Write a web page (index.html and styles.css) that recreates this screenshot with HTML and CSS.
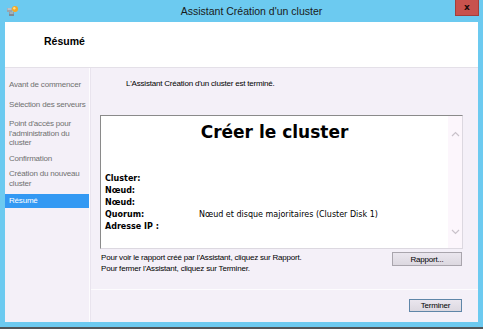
FILE: index.html
```html
<!DOCTYPE html>
<html lang="fr">
<head>
    <meta charset="UTF-8">
    <title>Assistant Création d'un cluster</title>
    <link rel="stylesheet" href="styles.css">
</head>
<body>
    <div class="window">
        <div class="title-bar">
            <svg class="title-icon" width="12" height="12" viewBox="0 0 12 12">
                <rect x="0" y="3" width="5" height="4" fill="#9aa4ac"/>
                <rect x="2" y="7" width="5" height="4" fill="#7f8a93"/>
                <rect x="0.5" y="3.5" width="4" height="1" fill="#d9dee2"/>
                <rect x="2.5" y="7.5" width="4" height="1" fill="#d0d6da"/>
                <circle cx="8" cy="4" r="3" fill="#f7a823"/>
                <circle cx="7.3" cy="3.2" r="1.2" fill="#fde08a"/>
            </svg>
            <span class="title-text">Assistant Création d'un cluster</span>
            <button class="close-btn">x</button>
        </div>

        <div class="client">
            <div class="header">
                <h1>Résumé</h1>
            </div>

            <div class="body">
                <ul class="steps">
                    <li class="step spaced">Avant de commencer</li>
                    <li class="step spaced">Sélection des serveurs</li>
                    <li class="step">Point d'accès pour l'administration du cluster</li>
                    <li class="step">Confirmation</li>
                    <li class="step">Création du nouveau cluster</li>
                    <li class="step current">Résumé</li>
                </ul>

                <div class="main">
                    <p class="intro">L'Assistant Création d'un cluster est terminé.</p>

                    <div class="report">
                        <div class="report-content">
                            <h2>Créer le cluster</h2>
                            <dl class="summary">
                                <dt>Cluster:</dt><dd></dd>
                                <dt>Nœud:</dt><dd></dd>
                                <dt>Nœud:</dt><dd></dd>
                                <dt>Quorum:</dt><dd>Nœud et disque majoritaires (Cluster Disk 1)</dd>
                                <dt>Adresse IP :</dt><dd></dd>
                            </dl>
                        </div>
                        <div class="scrollbar">
                            <svg width="9" height="6" viewBox="0 0 9 6"><path d="M1 5 L4.5 1.5 L8 5" fill="none" stroke="#c9c2ca" stroke-width="1.2"/></svg>
                            <svg width="9" height="6" viewBox="0 0 9 6"><path d="M1 1 L4.5 4.5 L8 1" fill="none" stroke="#c9c2ca" stroke-width="1.2"/></svg>
                        </div>
                    </div>

                    <div class="after">
                        <p class="hint">Pour voir le rapport créé par l'Assistant, cliquez sur Rapport.<br>Pour fermer l'Assistant, cliquez sur Terminer.</p>
                        <button class="btn btn-report">Rapport...</button>
                    </div>

                    <div class="footer">
                        <button class="btn btn-default">Terminer</button>
                    </div>
                </div>
            </div>
        </div>
    </div>
</body>
</html>
```

FILE: styles.css
```css
:root {
    --frame: #6ccaf0;
    --panel: #f4f0f8;
    --select: #3399f3;
    --ui-font: "Liberation Sans", Arial, sans-serif;
    --report-font: "DejaVu Sans", Verdana, sans-serif;
}

* {
    box-sizing: border-box;
}

body {
    margin: 0;
    background: var(--frame);
    font-family: var(--ui-font);
}

.window {
    width: 483px;
    height: 329px;
    display: flex;
    flex-direction: column;
    background: var(--frame);
    padding-bottom: 5px;
    border-bottom: 2px solid #505558;
}

/* Title bar */
.title-bar {
    height: 22px;
    display: flex;
    align-items: center;
    position: relative;
    padding: 0 7px;
}

.title-icon {
    display: block;
    margin-top: -1px;
}

.title-text {
    flex: 1;
    text-align: center;
    font-size: 10.5px;
    color: #1a1a1a;
    padding-left: 8px;
}

.close-btn {
    position: absolute;
    top: 0;
    right: 4px;
    width: 24px;
    height: 16px;
    border: 1px solid #a33f3b;
    border-top: none;
    background: #c8524d;
    color: #1c0b0a;
    font-family: "DejaVu Sans", sans-serif;
    font-weight: bold;
    font-size: 9px;
    line-height: 13px;
    padding: 0;
}

/* Client area */
.client {
    flex: 1;
    margin: 0 5px;
    display: flex;
    flex-direction: column;
    background: var(--panel);
}

.header {
    height: 46px;
    background: #fff;
    border-bottom: 1px solid #e4e0e8;
    padding: 13px 0 0 39px;
}

.header h1 {
    margin: 0;
    font-size: 10.5px;
    font-weight: bold;
    line-height: 12px;
    color: #000;
}

.body {
    flex: 1;
    display: flex;
}

.steps {
    width: 85px;
    margin: 0;
    padding: 12px 0 0;
    list-style: none;
    border-right: 1px solid #fdfcfe;
    font-size: 8px;
    letter-spacing: -0.2px;
    line-height: 9.5px;
    color: #707070;
}

.step {
    padding: 0 2px 0 4px;
    margin-bottom: 6px;
}

.step.spaced {
    margin-bottom: 10px;
}

.step.current {
    margin-top: 3px;
    background: var(--select);
    color: #fff;
    padding-top: 2px;
    padding-bottom: 2px;
}

/* Main pane */
.main {
    flex: 1;
    display: flex;
    flex-direction: column;
    border-left: 1px solid #e9e4ee;
}

.intro {
    margin: 11px 0 0 35px;
    font-size: 8px;
    letter-spacing: -0.2px;
    line-height: 10px;
    color: #000;
}

.report {
    height: 134px;
    margin: 26px 15px 0 9px;
    display: flex;
    background: #fff;
    border: 1px solid #dcd8e0;
    border-top-color: #8a8a8a;
    border-left-color: #8a8a8a;
}

.report-content {
    flex: 1;
    font-family: var(--report-font);
    color: #000;
}

.report h2 {
    margin: 6px 0 0;
    text-align: center;
    font-size: 17px;
    line-height: 20px;
    font-weight: bold;
}

.summary {
    margin: 31px 0 0 4px;
    display: grid;
    grid-template-columns: 94px 1fr;
    font-size: 8px;
    line-height: 12px;
}

.summary dt {
    font-weight: bold;
}

.summary dd {
    margin: 0;
}

.scrollbar {
    width: 14px;
    background: #fcf6fc;
    display: flex;
    flex-direction: column;
    justify-content: space-between;
    align-items: center;
    padding: 15px 0 13px;
}

.scrollbar svg {
    display: block;
}

.after {
    display: flex;
    justify-content: space-between;
    align-items: flex-start;
    margin: 3px 16px 0 10px;
}

.hint {
    margin: 0;
    font-size: 8px;
    letter-spacing: -0.2px;
    line-height: 11px;
    color: #000;
}

.btn {
    font-family: var(--ui-font);
    font-size: 8px;
    letter-spacing: -0.2px;
    color: #000;
    padding: 0;
    background: linear-gradient(#eae6ee, #dcd8e0);
    border: 1px solid #a9a5ad;
}

.btn-report {
    width: 70px;
    height: 14px;
}

.footer {
    margin-top: auto;
    height: 33px;
    border-top: 1px solid #fdfcfe;
    display: flex;
    justify-content: flex-end;
    padding: 9px 16px 0 0;
}

.btn-default {
    width: 53px;
    height: 13px;
    border-color: #5f86a8;
}
```
